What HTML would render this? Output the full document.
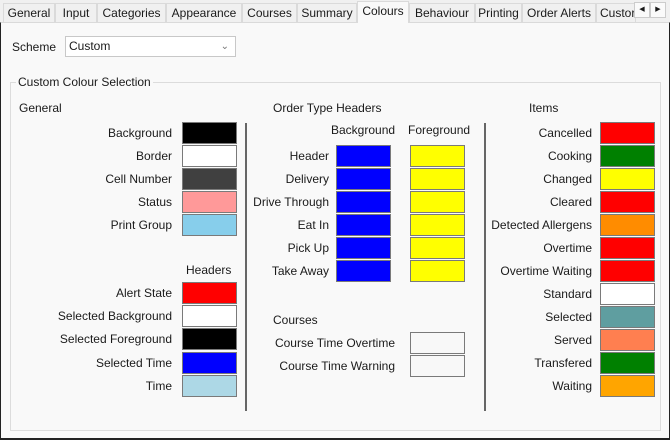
<!DOCTYPE html>
<html><head><style>
*{margin:0;padding:0;box-sizing:border-box}
body{width:670px;height:440px;background:#f0f0f0;font-family:"Liberation Sans",Arial,sans-serif;font-size:12px;color:#1a1a1a;position:relative;overflow:hidden}
.a{position:absolute}
.tab{position:absolute;top:3px;height:19px;border:1px solid #dadada;border-bottom:none;background:#f0f0f0;line-height:18px;text-align:center;font-size:12px}
.sw{position:absolute;width:55px;height:22px;border:1px solid #7a7a7a}
.l{position:absolute;text-align:right;line-height:22px;white-space:nowrap}
.h{position:absolute;white-space:nowrap}
</style></head><body>
<div class="a" style="left:0;top:22px;width:670px;height:418px;background:#f9f9f9;border:1px solid #dadada;border-left:1px solid #222;border-right:1px solid #222;border-bottom:2px solid #222"></div>
<div class="tab" style="left:3px;width:52px">General</div>
<div class="tab" style="left:55px;width:42px">Input</div>
<div class="tab" style="left:97px;width:69px">Categories</div>
<div class="tab" style="left:166px;width:76px">Appearance</div>
<div class="tab" style="left:242px;width:55px">Courses</div>
<div class="tab" style="left:297px;width:60px">Summary</div>
<div class="tab" style="left:357px;top:1px;width:52px;height:22px;background:#f9f9f9;line-height:19px">Colours</div>
<div class="tab" style="left:409px;width:66px">Behaviour</div>
<div class="tab" style="left:475px;width:47px">Printing</div>
<div class="tab" style="left:522px;width:74px">Order Alerts</div>
<div class="tab" style="left:596px;width:40px;text-align:left;padding-left:3px;overflow:hidden">Custor</div>
<div class="a" style="left:634px;top:2px;width:16px;height:16px;background:#fafafa;border:1px solid #ccc;font-size:7px;text-align:center;line-height:14px">◀</div>
<div class="a" style="left:650px;top:2px;width:16px;height:16px;background:#fafafa;border:1px solid #ccc;font-size:7px;text-align:center;line-height:14px">▶</div>

<div class="h" style="left:12px;top:40px">Scheme</div>
<div class="a" style="left:65px;top:36px;width:171px;height:21px;background:#fff;border:1px solid #c8c8c8;padding-left:3px;line-height:19px">Custom<span style="position:absolute;right:6px;top:0;color:#777;font-size:10px">&#8964;</span></div>

<div class="a" style="left:10px;top:82px;width:651px;height:349px;border:1px solid #dcdcdc"></div>
<div class="h" style="left:16px;top:75px;background:#f9f9f9;padding:0 2px">Custom Colour Selection</div>

<div class="h" style="left:19px;top:101px">General</div>
<div class="h" style="left:273px;top:101px">Order Type Headers</div>
<div class="h" style="left:529px;top:101px">Items</div>
<div class="a" style="left:245px;top:123px;width:2px;height:288px;background:#666"></div>
<div class="a" style="left:484px;top:123px;width:2px;height:288px;background:#666"></div>

<!-- General -->
<div class="l" style="right:498px;top:122px">Background</div><div class="sw" style="left:182px;top:122px;background:#000"></div>
<div class="l" style="right:498px;top:145px">Border</div><div class="sw" style="left:182px;top:145px;background:#fff"></div>
<div class="l" style="right:498px;top:168px">Cell Number</div><div class="sw" style="left:182px;top:168px;background:#404040"></div>
<div class="l" style="right:498px;top:191px">Status</div><div class="sw" style="left:182px;top:191px;background:#ff9999"></div>
<div class="l" style="right:498px;top:214px">Print Group</div><div class="sw" style="left:182px;top:214px;background:#87ceeb"></div>
<div class="h" style="left:186px;top:263px">Headers</div>
<div class="l" style="right:498px;top:282px">Alert State</div><div class="sw" style="left:182px;top:282px;background:#f00"></div>
<div class="l" style="right:498px;top:305px">Selected Background</div><div class="sw" style="left:182px;top:305px;background:#fff"></div>
<div class="l" style="right:498px;top:328px">Selected Foreground</div><div class="sw" style="left:182px;top:328px;background:#000"></div>
<div class="l" style="right:498px;top:352px">Selected Time</div><div class="sw" style="left:182px;top:352px;background:#00f"></div>
<div class="l" style="right:498px;top:375px">Time</div><div class="sw" style="left:182px;top:375px;background:#add8e6"></div>

<!-- Order types -->
<div class="h" style="left:331px;top:123px">Background</div>
<div class="h" style="left:408px;top:123px">Foreground</div>
<div class="l" style="right:341px;top:145px">Header</div><div class="sw" style="left:336px;top:145px;background:#00f"></div><div class="sw" style="left:410px;top:145px;background:#ff0"></div>
<div class="l" style="right:341px;top:168px">Delivery</div><div class="sw" style="left:336px;top:168px;background:#00f"></div><div class="sw" style="left:410px;top:168px;background:#ff0"></div>
<div class="l" style="right:341px;top:191px">Drive Through</div><div class="sw" style="left:336px;top:191px;background:#00f"></div><div class="sw" style="left:410px;top:191px;background:#ff0"></div>
<div class="l" style="right:341px;top:214px">Eat In</div><div class="sw" style="left:336px;top:214px;background:#00f"></div><div class="sw" style="left:410px;top:214px;background:#ff0"></div>
<div class="l" style="right:341px;top:237px">Pick Up</div><div class="sw" style="left:336px;top:237px;background:#00f"></div><div class="sw" style="left:410px;top:237px;background:#ff0"></div>
<div class="l" style="right:341px;top:260px">Take Away</div><div class="sw" style="left:336px;top:260px;background:#00f"></div><div class="sw" style="left:410px;top:260px;background:#ff0"></div>
<div class="h" style="left:273px;top:313px">Courses</div>
<div class="l" style="right:275px;top:332px">Course Time Overtime</div><div class="sw" style="left:410px;top:332px;background:#f8f8f8"></div>
<div class="l" style="right:275px;top:355px">Course Time Warning</div><div class="sw" style="left:410px;top:355px;background:#f8f8f8"></div>

<!-- Items -->
<div class="l" style="right:78px;top:122px">Cancelled</div><div class="sw" style="left:600px;top:122px;background:#f00"></div>
<div class="l" style="right:78px;top:145px">Cooking</div><div class="sw" style="left:600px;top:145px;background:#008000"></div>
<div class="l" style="right:78px;top:168px">Changed</div><div class="sw" style="left:600px;top:168px;background:#ff0"></div>
<div class="l" style="right:78px;top:191px">Cleared</div><div class="sw" style="left:600px;top:191px;background:#f00"></div>
<div class="l" style="right:78px;top:214px">Detected Allergens</div><div class="sw" style="left:600px;top:214px;background:#ff8c00"></div>
<div class="l" style="right:78px;top:237px">Overtime</div><div class="sw" style="left:600px;top:237px;background:#f00"></div>
<div class="l" style="right:78px;top:260px">Overtime Waiting</div><div class="sw" style="left:600px;top:260px;background:#f00"></div>
<div class="l" style="right:78px;top:283px">Standard</div><div class="sw" style="left:600px;top:283px;background:#fff"></div>
<div class="l" style="right:78px;top:306px">Selected</div><div class="sw" style="left:600px;top:306px;background:#5f9ea0"></div>
<div class="l" style="right:78px;top:329px">Served</div><div class="sw" style="left:600px;top:329px;background:#ff7f50"></div>
<div class="l" style="right:78px;top:352px">Transfered</div><div class="sw" style="left:600px;top:352px;background:#008000"></div>
<div class="l" style="right:78px;top:375px">Waiting</div><div class="sw" style="left:600px;top:375px;background:#ffa500"></div>
</body></html>
